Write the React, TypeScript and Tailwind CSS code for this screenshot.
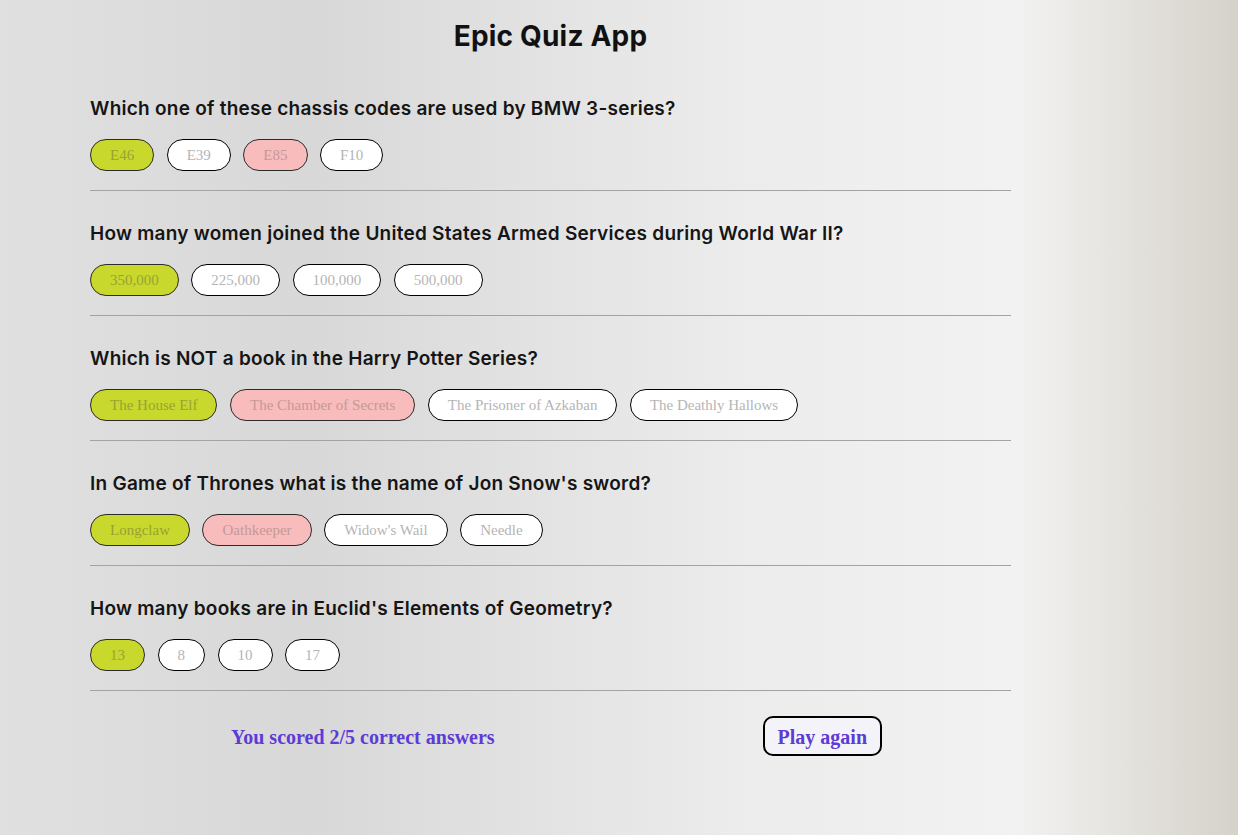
import React from "react";

type Question = {
  text: string;
  answers: string[];
  correct: number;
  picked: number;
};

const questions: Question[] = [
  { text: "Which one of these chassis codes are used by BMW 3-series?", answers: ["E46", "E39", "E85", "F10"], correct: 0, picked: 2 },
  { text: "How many women joined the United States Armed Services during World War II?", answers: ["350,000", "225,000", "100,000", "500,000"], correct: 0, picked: 0 },
  { text: "Which is NOT a book in the Harry Potter Series?", answers: ["The House Elf", "The Chamber of Secrets", "The Prisoner of Azkaban", "The Deathly Hallows"], correct: 0, picked: 1 },
  { text: "In Game of Thrones what is the name of Jon Snow's sword?", answers: ["Longclaw", "Oathkeeper", "Widow's Wail", "Needle"], correct: 0, picked: 1 },
  { text: "How many books are in Euclid's Elements of Geometry?", answers: ["13", "8", "10", "17"], correct: 0, picked: 0 },
];

function AnswerPill({ label, state }: { label: string; state: "correct" | "wrong" | "idle" }) {
  const tone =
    state === "correct"
      ? "bg-[#c8d82c] text-[#9aa331] border-[#2b2b2b]"
      : state === "wrong"
        ? "bg-[#f8bcbc] text-[#c49999] border-[#2b2b2b]"
        : "bg-white text-[#b5b5b5] border-black";
  return (
    <span
      className={`flex h-8 items-center rounded-full border px-[19px] text-[15px] font-['Liberation_Serif',serif] ${tone}`}
    >
      {label}
    </span>
  );
}

export default function App() {
  return (
    <div className="min-h-[835px] w-full bg-[linear-gradient(to_right,#e0e0e0_0%,#d8d8d8_25%,#ececec_60%,#f2f2f2_82%,#e6e4e0_90%,#d5d2ca_100%)]">
      <div className="ml-[90px] w-[921px] pt-[19px] font-['Inter',sans-serif]">
        <h1 className="text-center text-[28px] leading-[34px] font-bold tracking-[0.2px] text-[#111]">Epic Quiz App</h1>

        <div className="mt-[43px]">
          {questions.map((q, qi) => (
            <section className={qi === 0 ? "" : "pt-[30px]"} key={q.text}>
              <h2 className="pt-px text-[19px] leading-6 font-semibold tracking-[0.25px] text-[#151515]">{q.text}</h2>
              <div className="mt-[18px] flex gap-[12.5px]">
                {q.answers.map((a, ai) => (
                  <AnswerPill
                    key={a}
                    label={a}
                    state={ai === q.correct ? "correct" : ai === q.picked ? "wrong" : "idle"}
                  />
                ))}
              </div>
              <hr className="mt-[19px] border-0 border-t border-[#a3a3a3]" />
            </section>
          ))}
        </div>

        <div className="mt-[25px] flex items-center font-['Liberation_Serif',serif] font-bold text-[#5c3bd6]">
          <p className="ml-[141px] pt-[2px] text-[20px]">You scored 2/5 correct answers</p>
          <button
            className="mr-[129px] ml-auto h-10 rounded-[10px] border-2 border-black bg-[#f4f3f9] px-[13px] pt-px text-[20px]"
            type="button"
          >
            Play again
          </button>
        </div>
      </div>
    </div>
  );
}
